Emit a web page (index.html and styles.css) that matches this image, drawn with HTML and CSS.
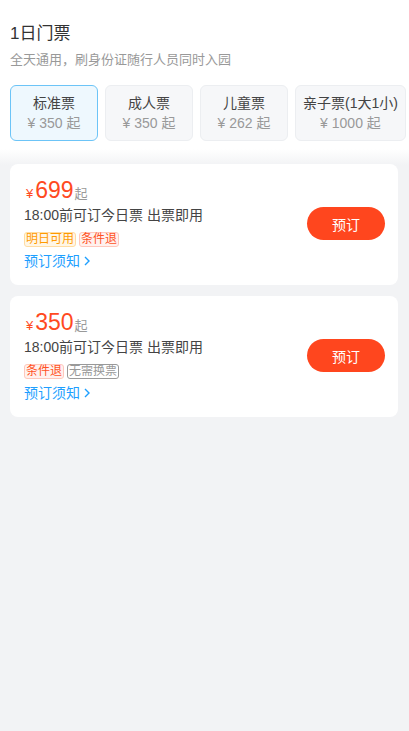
FILE: index.html
```html
<!DOCTYPE html>
<html lang="zh-CN">

<head>
    <meta charset="utf-8">
    <title>1日门票</title>

    <link rel="stylesheet" href="styles.css">
</head>

<body>
    <header class="intro">
        <h1 class="title">1日门票</h1>
        <p class="subtitle">全天通用，刷身份证随行人员同时入园</p>
        <div class="tabs">
            <div class="tab active">
                <p class="tab-name">标准票</p>
                <p class="tab-price">¥ 350 起</p>
            </div>
            <div class="tab">
                <p class="tab-name">成人票</p>
                <p class="tab-price">¥ 350 起</p>
            </div>
            <div class="tab">
                <p class="tab-name">儿童票</p>
                <p class="tab-price">¥ 262 起</p>
            </div>
            <div class="tab">
                <p class="tab-name">亲子票(1大1小)</p>
                <p class="tab-price">¥ 1000 起</p>
            </div>
        </div>
    </header>

    <main class="list">
        <div class="card">
            <div class="info">
                <p class="price"><span class="yen">¥</span><span class="num">699</span><span class="from">起</span></p>
                <p class="desc">18:00前可订今日票 出票即用</p>
                <div class="tags">
                    <span class="tag orange">明日可用</span>
                    <span class="tag red">条件退</span>
                </div>
                <a class="notice" href="#">预订须知
                    <svg width="8" height="12" viewBox="0 0 8 12"><path d="M2 2l4 4-4 4" fill="none" stroke="#1e9fff" stroke-width="1.4"/></svg>
                </a>
            </div>
            <button class="book">预订</button>
        </div>

        <div class="card">
            <div class="info">
                <p class="price"><span class="yen">¥</span><span class="num">350</span><span class="from">起</span></p>
                <p class="desc">18:00前可订今日票 出票即用</p>
                <div class="tags">
                    <span class="tag red">条件退</span>
                    <span class="tag gray">无需换票</span>
                </div>
                <a class="notice" href="#">预订须知
                    <svg width="8" height="12" viewBox="0 0 8 12"><path d="M2 2l4 4-4 4" fill="none" stroke="#1e9fff" stroke-width="1.4"/></svg>
                </a>
            </div>
            <button class="book">预订</button>
        </div>
    </main>
</body>

</html>
```

FILE: styles.css
```css
* {
    padding: 0;
    margin: 0;
    box-sizing: border-box;
    font-family: "Liberation Sans", "Noto Sans CJK SC", sans-serif;
}

body {
    background-color: #f2f3f5;
    min-height: 731px;
}

.intro {
    background-color: #fff;
    padding: 22px 0 8px 10px;
}

.title {
    font-size: 17px;
    font-weight: normal;
    line-height: 24px;
    color: #333;
}

.subtitle {
    margin-top: 5px;
    font-size: 13px;
    line-height: 18px;
    color: #999;
}

.tabs {
    display: flex;
    gap: 7px;
    margin-top: 16px;
}

.tab {
    flex: 0 0 auto;
    min-width: 88px;
    height: 56px;
    padding: 0 7px;
    border: 1px solid #eceef1;
    border-radius: 6px;
    background-color: #f6f7f9;
    text-align: center;
    display: flex;
    flex-direction: column;
    justify-content: center;
}

.tab.active {
    background-color: #eef8fe;
    border-color: #6cc4f7;
}

.tab-name {
    font-size: 14px;
    line-height: 20px;
    color: #444;
}

.tab-price {
    font-size: 14px;
    line-height: 20px;
    color: #999;
}

.list {
    padding: 15px 11px 20px 10px;
    background: linear-gradient(#fff, #f2f3f5 16px);
}

.card {
    display: flex;
    align-items: center;
    justify-content: space-between;
    background-color: #fff;
    border-radius: 8px;
    padding: 12px 13px 14px 14px;
    margin-bottom: 11px;
}

.price {
    display: flex;
    align-items: baseline;
    height: 28px;
    line-height: 28px;
    color: #ff4a1f;
}

.yen {
    font-size: 13px;
    margin: 0 2px;
}

.num {
    font-size: 23px;
}

.from {
    font-size: 13px;
    color: #999;
    margin-left: 1px;
}

.desc {
    height: 22px;
    font-size: 14px;
    line-height: 22px;
    color: #444;
}

.tags {
    display: flex;
    gap: 3px;
    margin-top: 6px;
}

.tag {
    font-size: 12px;
    line-height: 13px;
    padding: 0 1px;
    border: 1px solid;
    border-radius: 3px;
}

.tag.orange {
    color: #ff9a00;
    background-color: #fff6e6;
    border-color: #ffdca3;
}

.tag.red {
    color: #ff5124;
    background-color: #fff1ee;
    border-color: #ffc8bc;
}

.tag.gray {
    color: #999;
    border-color: #999;
}

.notice {
    display: flex;
    align-items: center;
    gap: 3px;
    height: 20px;
    margin-top: 4px;
    font-size: 14px;
    line-height: 20px;
    color: #1e9fff;
    text-decoration: none;
}

.book {
    width: 78px;
    height: 33px;
    border: none;
    border-radius: 17px;
    background-color: #ff461e;
    color: #fff;
    font-size: 14px;
    cursor: pointer;
}
```
